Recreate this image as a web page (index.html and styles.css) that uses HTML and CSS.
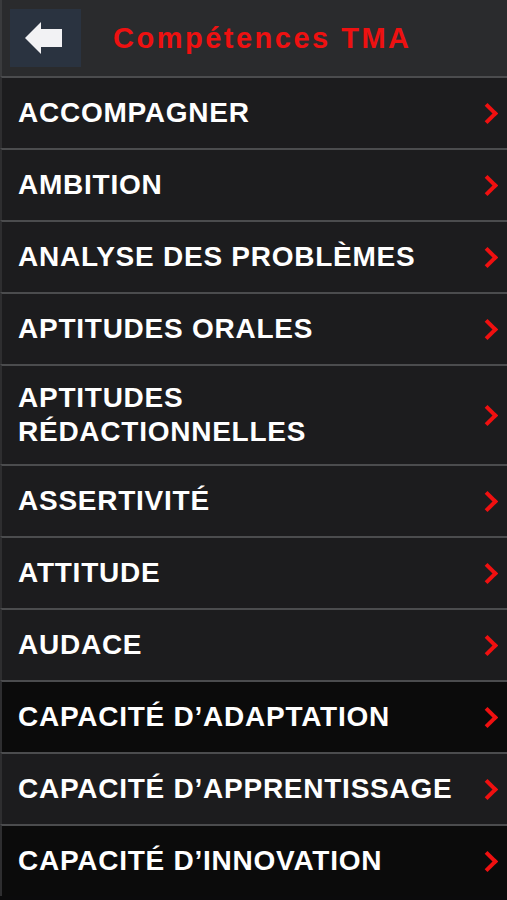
FILE: index.html
```html
<!DOCTYPE html>
<html lang="fr">
<head>
    <meta charset="UTF-8">
    <meta name="viewport" content="width=device-width, initial-scale=1.0">
    <title>Compétences TMA</title>
    <link rel="stylesheet" href="styles.css">
</head>
<body>
    <header class="topbar">
        <button class="back" aria-label="Retour">
            <svg width="38" height="32" viewBox="0 0 38 32">
                <polygon points="0,16 16,0 16,7 37,7 37,25 16,25 16,32" fill="#f2f2f4"/>
            </svg>
        </button>
        <h1 class="title">Compétences TMA</h1>
    </header>

    <ul class="list">
        <li class="item">ACCOMPAGNER</li>
        <li class="item">AMBITION</li>
        <li class="item">ANALYSE DES PROBLÈMES</li>
        <li class="item">APTITUDES ORALES</li>
        <li class="item tall">APTITUDES<br>RÉDACTIONNELLES</li>
        <li class="item">ASSERTIVITÉ</li>
        <li class="item">ATTITUDE</li>
        <li class="item">AUDACE</li>
        <li class="item dark">CAPACITÉ D’ADAPTATION</li>
        <li class="item">CAPACITÉ D’APPRENTISSAGE</li>
        <li class="item dark">CAPACITÉ D’INNOVATION</li>
    </ul>
</body>
</html>
```

FILE: styles.css
```css
body {
    margin: 0;
    background-color: #0b0b0c;
    font-family: "Liberation Sans", Arial, sans-serif;
    overflow: hidden;
}
.topbar {
    height: 76px;
    display: flex;
    align-items: center;
    background-color: #2a2b2d;
    border-left: 2px solid #3a3b3d;
    box-sizing: border-box;
}
.back {
    width: 71px;
    height: 58px;
    margin-left: 8px;
    border: none;
    background-color: #2a3340;
    display: flex;
    align-items: center;
    justify-content: center;
    padding: 0 4px 0 0;
}
.title {
    margin: 0 0 0 32px;
    color: #ee1111;
    font-size: 29px;
    font-weight: bold;
    letter-spacing: 2.5px;
}
.list {
    list-style: none;
    margin: 0;
    padding: 0;
}
.item {
    position: relative;
    height: 72px;
    box-sizing: border-box;
    display: flex;
    align-items: center;
    padding: 0 40px 0 16px;
    background-color: #1c1c1e;
    border-top: 2px solid #4b4c4e;
    border-left: 2px solid #2e2e30;
    color: #ffffff;
    font-size: 28px;
    font-weight: bold;
    letter-spacing: 0.75px;
    line-height: 34px;
}
.item::after {
    content: "";
    position: absolute;
    right: 12px;
    top: 50%;
    width: 11px;
    height: 11px;
    margin-top: -7px;
    border-top: 4px solid #f01010;
    border-right: 4px solid #f01010;
    transform: rotate(45deg);
}
.item.tall {
    height: 100px;
}
.item.dark {
    background-color: #0b0b0b;
}
```
